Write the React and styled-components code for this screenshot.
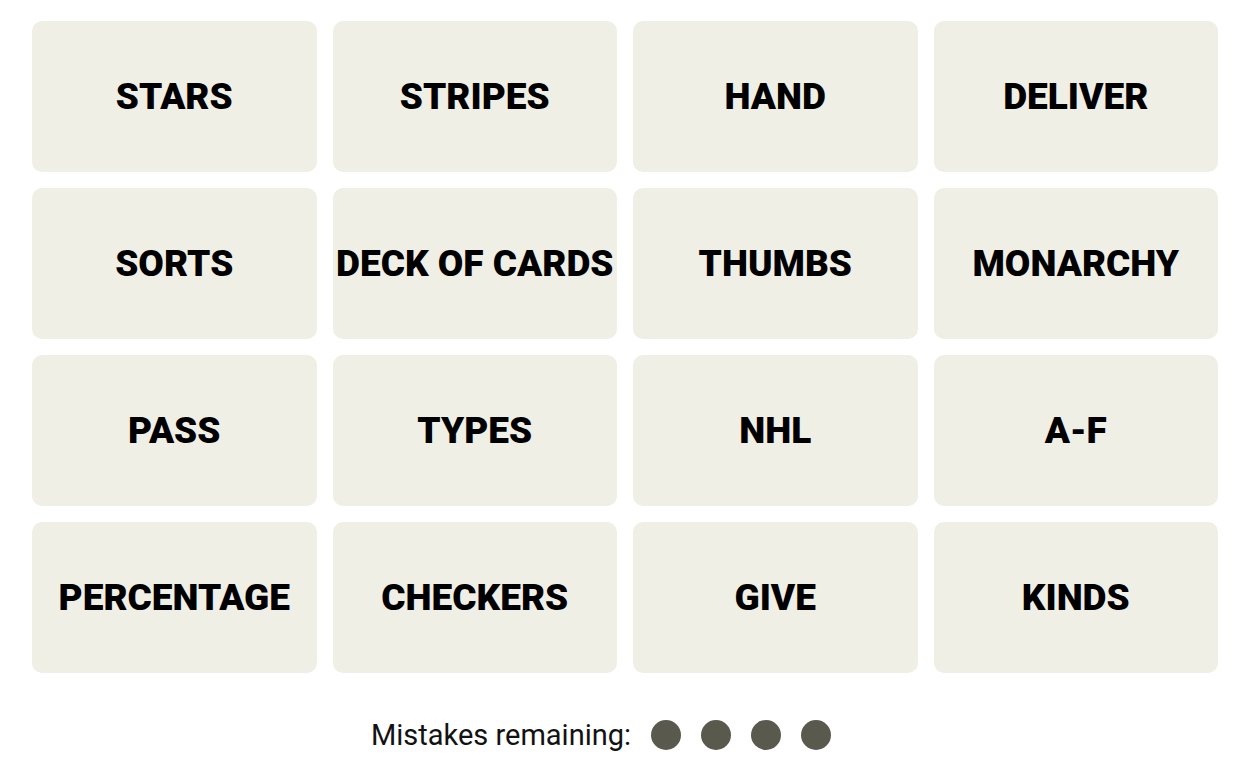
import styled, { createGlobalStyle } from "styled-components"

const GlobalStyle = createGlobalStyle`
  body {
    margin: 0;
    background: #ffffff;
    font-family: Roboto, "Liberation Sans", sans-serif;
  }
`

const words = [
  'STARS', 'STRIPES', 'HAND', 'DELIVER',
  'SORTS', 'DECK OF CARDS', 'THUMBS', 'MONARCHY',
  'PASS', 'TYPES', 'NHL', 'A-F',
  'PERCENTAGE', 'CHECKERS', 'GIVE', 'KINDS'
]

const Board = styled.div`
  width: 1186px;
  margin: 21px auto 0;
`

const Grid = styled.div`
  display: grid;
  grid-template-columns: repeat(4, 1fr);
  grid-auto-rows: 151px;
  gap: 16px;
`

const Tile = styled.div`
  background: #efefe6;
  border-radius: 10px;
  display: flex;
  align-items: center;
  justify-content: center;
  font-family: Roboto, "Liberation Sans", sans-serif;
  font-weight: 900;
  font-size: 37px;
  color: #000;
  white-space: nowrap;
`

const MistakesRow = styled.div`
  display: flex;
  align-items: center;
  justify-content: center;
  gap: 20px;
  margin-top: 46px;
  padding-right: 48px;
  height: 32px;
`

const MistakesLabel = styled.span`
  font-family: Roboto, "Liberation Sans", sans-serif;
  font-size: 29px;
  color: #121212;
`

const Dots = styled.div`
  display: flex;
  gap: 20px;
`

const Dot = styled.span`
  width: 30px;
  height: 30px;
  border-radius: 50%;
  background: #5a594e;
`

const App = () => {
  return (
    <>
      <GlobalStyle />
      <Board>
        <Grid>
          {words.map((w) => (
            <Tile key={w}>{w}</Tile>
          ))}
        </Grid>
        <MistakesRow>
          <MistakesLabel>Mistakes remaining:</MistakesLabel>
          <Dots>
            {[0, 1, 2, 3].map((i) => <Dot key={i} />)}
          </Dots>
        </MistakesRow>
      </Board>
    </>
  )
}

export default App
